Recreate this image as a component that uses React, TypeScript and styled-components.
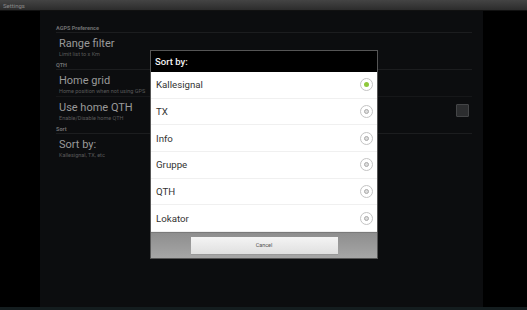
import React from 'react';
import styled, { createGlobalStyle } from 'styled-components';

const GlobalStyle = createGlobalStyle`
  html, body {
    margin: 0;
    padding: 0;
    background: #000;
    font-family: Roboto, "Liberation Sans", sans-serif;
  }
`;

const Screen = styled.div`
  position: relative;
  width: 527px;
  height: 310px;
  display: flex;
  flex-direction: column;
  background: #000;
  overflow: hidden;
`;

const TitleBar = styled.div`
  height: 10px;
  padding-left: 3px;
  display: flex;
  align-items: center;
  background: linear-gradient(#444, #2c2c2c);
  border-bottom: 1px solid #111;
  color: #8a8a8a;
  font-size: 6px;
`;

const Body = styled.div`
  flex: 1;
  display: flex;
`;

const Side = styled.div<{ $w: number }>`
  width: ${p => p.$w}px;
  background: #000;
`;

const Panel = styled.div`
  flex: 1;
  background: #0c0d0f;
  padding: 12px 11px 0 16px;
`;

const BottomLine = styled.div`
  height: 3px;
  background: #141d1f;
`;

const Category = styled.div`
  height: 9px;
  line-height: 10px;
  font-size: 5.5px;
  font-weight: bold;
  color: #6f6f6f;
  border-bottom: 1px solid #1c1d1f;
`;

const Item = styled.div<{ $last?: boolean }>`
  padding: 4px 3px 0 3px;
  box-sizing: border-box;
  height: 27px;
  display: flex;
  align-items: flex-start;
  justify-content: space-between;
  border-bottom: ${p => (p.$last ? 'none' : '1px solid #161719')};
`;

const ItemText = styled.div`
  display: flex;
  flex-direction: column;
`;

const ItemTitle = styled.div`
  font-size: 11px;
  line-height: 13px;
  color: #9a9a9a;
`;

const ItemSub = styled.div`
  font-size: 5.5px;
  line-height: 8px;
  color: #5a5a5a;
`;

const CheckBox = styled.div`
  width: 11px;
  height: 11px;
  margin-top: 3px;
  background: #2c2d2f;
  border: 1px solid #444547;
  border-radius: 1px;
`;

const Dialog = styled.div`
  position: absolute;
  left: 150px;
  top: 50px;
  width: 226px;
  height: 207px;
  border: 1px solid #555;
  display: flex;
  flex-direction: column;
  background: #fff;
`;

const DialogTitle = styled.div`
  height: 21px;
  background: #000;
  color: #f2f2f2;
  font-size: 9.5px;
  font-weight: 500;
  display: flex;
  align-items: center;
  padding-left: 4px;
`;

const Option = styled.div`
  height: 26.7px;
  box-sizing: border-box;
  display: flex;
  align-items: center;
  justify-content: space-between;
  padding: 0 4px 0 5px;
  color: #333;
  font-size: 9.7px;
  border-bottom: 1px solid #f0f0f0;
`;

const Radio = styled.div<{ $on?: boolean }>`
  width: 11px;
  height: 11px;
  border-radius: 50%;
  border: 1px solid #c4c4c4;
  display: flex;
  align-items: center;
  justify-content: center;

  &::after {
    content: '';
    width: ${p => (p.$on ? 5 : 3)}px;
    height: ${p => (p.$on ? 5 : 3)}px;
    border-radius: 50%;
    background: ${p => (p.$on ? '#8fc83c' : '#dcdcdc')};
    border: ${p => (p.$on ? 'none' : '0.5px solid #aaa')};
  }
`;

const Footer = styled.div`
  flex: 1;
  background: linear-gradient(#8e8e8e, #a6a6a6);
  display: flex;
  align-items: center;
  justify-content: center;
  border-top: 1px solid #7a7a7a;
`;

const CancelButton = styled.div`
  width: 147px;
  height: 17px;
  background: linear-gradient(#f4f4f4, #e0e0e0);
  border-bottom: 1px solid #999;
  color: #555;
  font-size: 5.5px;
  display: flex;
  align-items: center;
  justify-content: center;
`;

const options = ['Kallesignal', 'TX', 'Info', 'Gruppe', 'QTH', 'Lokator'];

export default function App() {
  return (
    <Screen>
      <GlobalStyle />
      <TitleBar>Settings</TitleBar>
      <Body>
        <Side $w={40} />
        <Panel>
          <Category>AGPS Preference</Category>
          <Item $last>
            <ItemText>
              <ItemTitle>Range filter</ItemTitle>
              <ItemSub>Limit list to x Km</ItemSub>
            </ItemText>
          </Item>
          <Category>QTH</Category>
          <Item>
            <ItemText>
              <ItemTitle>Home grid</ItemTitle>
              <ItemSub>Home position when not using GPS</ItemSub>
            </ItemText>
          </Item>
          <Item $last>
            <ItemText>
              <ItemTitle>Use home QTH</ItemTitle>
              <ItemSub>Enable/Disable home QTH</ItemSub>
            </ItemText>
            <CheckBox />
          </Item>
          <Category>Sort</Category>
          <Item $last>
            <ItemText>
              <ItemTitle>Sort by:</ItemTitle>
              <ItemSub>Kallesignal, TX, etc</ItemSub>
            </ItemText>
          </Item>
        </Panel>
        <Side $w={44} />
      </Body>
      <BottomLine />
      <Dialog>
        <DialogTitle>Sort by:</DialogTitle>
        {options.map((o, i) => (
          <Option key={o}>
            {o}
            <Radio $on={i === 0} />
          </Option>
        ))}
        <Footer>
          <CancelButton>Cancel</CancelButton>
        </Footer>
      </Dialog>
    </Screen>
  );
}
